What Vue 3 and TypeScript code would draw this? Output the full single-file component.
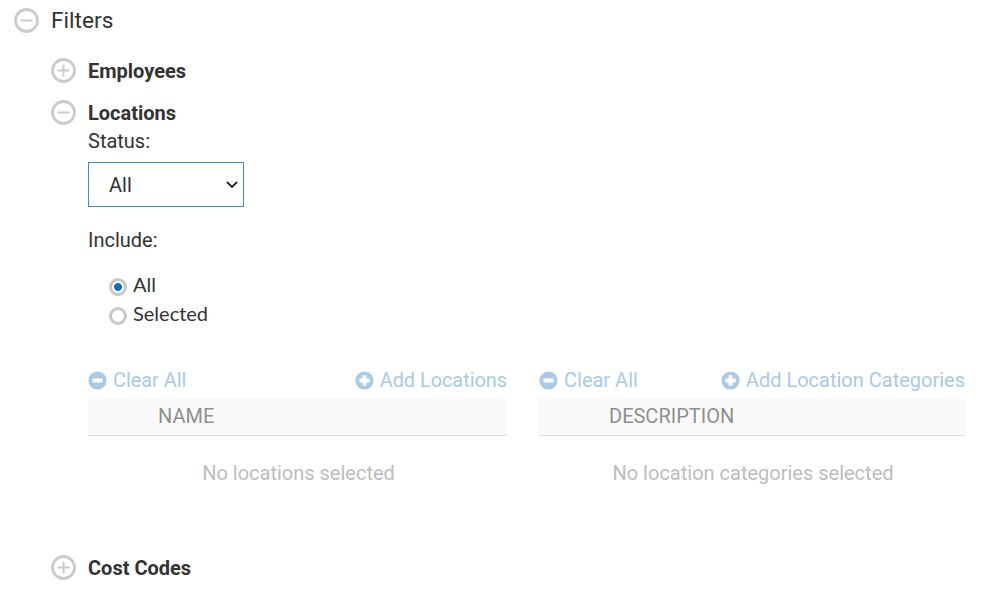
<script setup lang="ts">
interface Pane { clear: string; add: string; column: string; empty: string }
const panes: Pane[] = [
  { clear: 'Clear All', add: 'Add Locations', column: 'NAME', empty: 'No locations selected' },
  { clear: 'Clear All', add: 'Add Location Categories', column: 'DESCRIPTION', empty: 'No location categories selected' },
]
</script>

<template>
  <div class="page">
    <div class="top-row">
      <svg class="toggle" viewBox="0 0 25 25"><circle cx="12.5" cy="12.5" r="11" /><path d="M6.5 12.5h12" /></svg>
      <span class="top-title">Filters</span>
    </div>

    <div class="section-row first">
      <svg class="toggle" viewBox="0 0 25 25"><circle cx="12.5" cy="12.5" r="11" /><path d="M6.5 12.5h12M12.5 6.5v12" /></svg>
      <span class="section-title">Employees</span>
    </div>

    <div class="section-row second">
      <svg class="toggle" viewBox="0 0 25 25"><circle cx="12.5" cy="12.5" r="11" /><path d="M6.5 12.5h12" /></svg>
      <span class="section-title">Locations</span>
    </div>

    <div class="body">
      <label class="label status">Status:</label>
      <div class="select-wrap">
        <select class="select">
          <option>All</option>
        </select>
        <svg class="chevron" viewBox="0 0 12 7"><path d="M1 1l5 5 5-5" /></svg>
      </div>
      <div class="label include">Include:</div>
      <div class="radios">
        <label class="radio"><input type="radio" name="inc" checked /><span>All</span></label>
        <label class="radio"><input type="radio" name="inc" /><span>Selected</span></label>
      </div>

      <div class="panes">
        <div v-for="(p, i) in panes" :key="i" class="pane" :class="i === 0 ? 'left' : 'right'">
          <div class="actions">
            <a class="action">
              <svg viewBox="0 0 20 20"><circle cx="10" cy="10" r="9.5" /><rect x="4.6" y="8" width="10.8" height="4" rx="1" /></svg>
              {{ p.clear }}
            </a>
            <a class="action">
              <svg viewBox="0 0 20 20"><circle cx="10" cy="10" r="9.5" /><path d="M8 4.6h4V8h3.4v4H12v3.4H8V12H4.6V8H8z" /></svg>
              {{ p.add }}
            </a>
          </div>
          <div class="head">{{ p.column }}</div>
          <div class="empty">{{ p.empty }}</div>
        </div>
      </div>
    </div>

    <div class="section-row last">
      <svg class="toggle" viewBox="0 0 25 25"><circle cx="12.5" cy="12.5" r="11" /><path d="M6.5 12.5h12M12.5 6.5v12" /></svg>
      <span class="section-title">Cost Codes</span>
    </div>
  </div>
</template>

<style>
html, body { margin: 0; background: #fff; }
</style>

<style scoped>
.page {
  width: 1000px;
  height: 608px;
  overflow: hidden;
  font-family: Roboto, "Liberation Sans", sans-serif;
  color: #333;
  box-sizing: border-box;
  padding: 6px 0 0 14px;
}
.top-row { display: flex; align-items: center; height: 28px; }
.top-title { margin-left: 12px; font-size: 22.7px; color: #333; }
.toggle { width: 25px; height: 25px; flex: none; }
.toggle circle { fill: #fff; stroke: #cbcbcb; stroke-width: 2.8; }
.toggle path { fill: none; stroke: #cbcbcb; stroke-width: 2; }
.section-row { display: flex; align-items: center; height: 28px; margin-left: 37px; }
.section-row.first { margin-top: 22px; }
.section-row.second { margin-top: 14px; }
.section-row.last { margin-top: 42px; }
.section-title { margin-left: 12px; padding-top: 2px; font-size: 20px; font-weight: 700; color: #333; }
.body { margin-left: 74px; }
.label { display: block; font-size: 20px; line-height: 22px; color: #333; }
.status { margin-top: 4px; }
.select-wrap { position: relative; width: 156px; margin-top: 10px; }
.select {
  display: block;
  width: 156px;
  height: 45px;
  padding: 0 12px 0 20px;
  box-sizing: border-box;
  appearance: none;
  background: #fff;
  border: 1px solid #428bca;
  border-radius: 0;
  font-family: inherit;
  font-size: 20px;
  color: #333;
  outline: none;
}
.chevron {
  position: absolute;
  left: 138px;
  top: 19px;
  width: 12px;
  height: 7px;
  fill: none;
  stroke: #222;
  stroke-width: 1.8;
  pointer-events: none;
}
.include { margin-top: 22px; }
.radios { margin-top: 18px; margin-left: 21px; display: flex; flex-direction: column; }
.radio { display: flex; align-items: center; height: 29px; font-size: 20px; color: #333; }
.radio span { margin-left: 6px; font-family: Lato, sans-serif; }
.radio input {
  appearance: none;
  width: 18px;
  height: 18px;
  margin: 7px 0 0;
  border: 3px solid #c8c8c8;
  border-radius: 50%;
  background: #fff;
  box-sizing: border-box;
}
.radio input:checked { background: radial-gradient(circle, #0f6fc6 0 3.6px, #fff 4.2px); }
.panes { display: flex; gap: 32px; margin-top: 41px; width: 877px; }
.pane.left { width: 419px; flex: none; }
.pane.right { width: 426px; flex: none; }
.actions { display: flex; justify-content: space-between; align-items: center; height: 24px; }
.action { display: flex; align-items: center; gap: 6px; font-size: 19.85px; color: #a9cae6; }
.pane.right .action { font-size: 20px; }
.action svg { width: 19px; height: 19px; flex: none; }
.action svg circle { fill: #a9cae6; }
.action svg rect, .action svg path { fill: #fff; }
.head {
  margin-top: 6px;
  height: 37px;
  line-height: 37px;
  padding-left: 70px;
  background: #fafafa;
  border-bottom: 1px solid #ddd;
  font-size: 20px;
  color: #8f8f8f;
}
.empty { height: 75px; line-height: 75px; padding-left: 2px; text-align: center; font-size: 20px; color: #bdbdbd; }
</style>
